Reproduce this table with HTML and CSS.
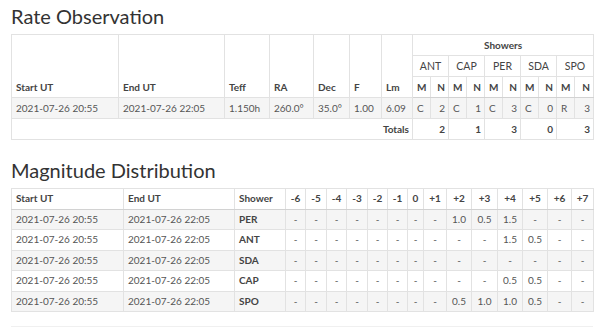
FILE: index.html
```html
<!DOCTYPE html>
<html>
<head>
<meta charset="utf-8">
<link rel="stylesheet" href="styles.css">
</head>
<body>
<div class="page">
  <h3 class="title first">Rate Observation</h3>
  <table class="tbl rate">
    <colgroup>
      <col class="w107"><col class="w106"><col class="w45"><col class="w44"><col class="w36"><col class="w32"><col class="w31">
      <col class="w18"><col class="w18"><col class="w18"><col class="w18"><col class="w18"><col class="w18"><col class="w18"><col class="w18"><col class="w18"><col class="w17">
    </colgroup>
    <thead>
      <tr>
        <th rowspan="3" class="bottom">Start UT</th>
        <th rowspan="3" class="bottom">End UT</th>
        <th rowspan="3" class="bottom">Teff</th>
        <th rowspan="3" class="bottom">RA</th>
        <th rowspan="3" class="bottom">Dec</th>
        <th rowspan="3" class="bottom">F</th>
        <th rowspan="3" class="bottom">Lm</th>
        <th colspan="10" class="center">Showers</th>
      </tr>
      <tr>
        <th colspan="2" class="center reg">ANT</th>
        <th colspan="2" class="center reg">CAP</th>
        <th colspan="2" class="center reg">PER</th>
        <th colspan="2" class="center reg">SDA</th>
        <th colspan="2" class="center reg">SPO</th>
      </tr>
      <tr class="last">
        <th class="m">M</th><th class="n">N</th>
        <th class="m">M</th><th class="n">N</th>
        <th class="m">M</th><th class="n">N</th>
        <th class="m">M</th><th class="n">N</th>
        <th class="m">M</th><th class="n">N</th>
      </tr>
    </thead>
    <tbody>
      <tr class="stripe">
        <td>2021-07-26 20:55</td>
        <td>2021-07-26 22:05</td>
        <td>1.150h</td>
        <td>260.0°</td>
        <td>35.0°</td>
        <td>1.00</td>
        <td>6.09</td>
        <td class="m">C</td><td class="n">2</td>
        <td class="m">C</td><td class="n">1</td>
        <td class="m">C</td><td class="n">3</td>
        <td class="m">C</td><td class="n">0</td>
        <td class="m">R</td><td class="n">3</td>
      </tr>
      <tr>
        <th colspan="7" class="right">Totals</th>
        <th colspan="2" class="right">2</th>
        <th colspan="2" class="right">1</th>
        <th colspan="2" class="right">3</th>
        <th colspan="2" class="right">0</th>
        <th colspan="2" class="right">3</th>
      </tr>
    </tbody>
  </table>

  <h3 class="title second">Magnitude Distribution</h3>
  <table class="tbl mag">
    <colgroup>
      <col class="w112"><col class="w111"><col class="w51">
      <col class="w20"><col class="w21"><col class="w20"><col class="w21"><col class="w20"><col class="w20"><col class="w16">
      <col class="w23"><col class="w25"><col class="w26"><col class="w25"><col class="w25"><col class="w24"><col class="w22">
    </colgroup>
    <thead>
      <tr class="last">
        <th>Start UT</th><th>End UT</th><th>Shower</th>
        <th class="center">-6</th><th class="center">-5</th><th class="center">-4</th><th class="center">-3</th><th class="center">-2</th><th class="center">-1</th><th class="center">0</th>
        <th class="center">+1</th><th class="center">+2</th><th class="center">+3</th><th class="center">+4</th><th class="center">+5</th><th class="center">+6</th><th class="center">+7</th>
      </tr>
    </thead>
    <tbody>
      <tr class="stripe">
        <td>2021-07-26 20:55</td><td>2021-07-26 22:05</td><td class="b">PER</td>
        <td class="c">-</td><td class="c">-</td><td class="c">-</td><td class="c">-</td><td class="c">-</td><td class="c">-</td><td class="c">-</td>
        <td class="c">-</td><td class="c">1.0</td><td class="c">0.5</td><td class="c">1.5</td><td class="c">-</td><td class="c">-</td><td class="c">-</td>
      </tr>
      <tr>
        <td>2021-07-26 20:55</td><td>2021-07-26 22:05</td><td class="b">ANT</td>
        <td class="c">-</td><td class="c">-</td><td class="c">-</td><td class="c">-</td><td class="c">-</td><td class="c">-</td><td class="c">-</td>
        <td class="c">-</td><td class="c">-</td><td class="c">-</td><td class="c">1.5</td><td class="c">0.5</td><td class="c">-</td><td class="c">-</td>
      </tr>
      <tr class="stripe">
        <td>2021-07-26 20:55</td><td>2021-07-26 22:05</td><td class="b">SDA</td>
        <td class="c">-</td><td class="c">-</td><td class="c">-</td><td class="c">-</td><td class="c">-</td><td class="c">-</td><td class="c">-</td>
        <td class="c">-</td><td class="c">-</td><td class="c">-</td><td class="c">-</td><td class="c">-</td><td class="c">-</td><td class="c">-</td>
      </tr>
      <tr>
        <td>2021-07-26 20:55</td><td>2021-07-26 22:05</td><td class="b">CAP</td>
        <td class="c">-</td><td class="c">-</td><td class="c">-</td><td class="c">-</td><td class="c">-</td><td class="c">-</td><td class="c">-</td>
        <td class="c">-</td><td class="c">-</td><td class="c">-</td><td class="c">0.5</td><td class="c">0.5</td><td class="c">-</td><td class="c">-</td>
      </tr>
      <tr class="stripe">
        <td>2021-07-26 20:55</td><td>2021-07-26 22:05</td><td class="b">SPO</td>
        <td class="c">-</td><td class="c">-</td><td class="c">-</td><td class="c">-</td><td class="c">-</td><td class="c">-</td><td class="c">-</td>
        <td class="c">-</td><td class="c">0.5</td><td class="c">1.0</td><td class="c">1.0</td><td class="c">0.5</td><td class="c">-</td><td class="c">-</td>
      </tr>
    </tbody>
  </table>
  <div class="next-panel"></div>
</div>
</body>
</html>
```

FILE: styles.css
```css
html, body {
  margin: 0;
  padding: 0;
  background: #fff;
}
body {
  font-family: Lato, "Open Sans", sans-serif;
  color: #555;
}
.page {
  padding: 0 7px 0 11px;
}
.title {
  font-family: Lato, sans-serif;
  font-weight: 400;
  font-size: 20px;
  line-height: 23px;
  color: #333;
  margin: 0;
}
.title.first {
  margin-top: 5px;
  margin-bottom: 6px;
}
.title.second {
  margin-top: 19px;
  margin-bottom: 6px;
}
.tbl {
  width: 582px;
  table-layout: fixed;
  border-collapse: collapse;
  font-size: 10px;
  line-height: 14px;
}
.tbl.mag {
  line-height: 13.5px;
}
.tbl th, .tbl td {
  border: 1px solid #e2e2e2;
  padding: 3px 4px;
  text-align: left;
  vertical-align: middle;
  white-space: nowrap;
  overflow: hidden;
}
.tbl th {
  font-weight: 700;
  color: #444;
}
.tbl tr.last th {
  border-bottom-color: #d2d2d2;
}
.tbl .bottom {
  vertical-align: bottom;
}
.tbl .center, .tbl .c {
  text-align: center;
}
.tbl .right {
  text-align: right;
}
.tbl th.reg {
  font-weight: 400;
  color: #444;
  font-size: 10.5px;
}
.tbl .m {
  text-align: left;
  padding-left: 4px;
  padding-right: 0;
}
.tbl .n {
  text-align: right;
  padding-left: 0;
  padding-right: 3px;
}
.tbl td.b {
  font-weight: 700;
  color: #444;
}
.tbl tr.stripe td {
  background: #f5f5f5;
}
.rate .right {
  padding-right: 3px;
}
.w107 { width: 107px; }
.w106 { width: 106px; }
.w45 { width: 45px; }
.w44 { width: 44px; }
.w36 { width: 36px; }
.w32 { width: 32px; }
.w31 { width: 31px; }
.w18 { width: 18px; }
.w17 { width: 19px; }
.w112 { width: 112px; }
.w111 { width: 111px; }
.w51 { width: 51px; }
.w20 { width: 20px; }
.w21 { width: 21px; }
.w16 { width: 16px; }
.w23 { width: 23px; }
.w25 { width: 25px; }
.w26 { width: 26px; }
.w24 { width: 24px; }
.w22 { width: 22px; }
.next-panel {
  margin-top: 14px;
  border-top: 1px solid #f0f0f0;
  width: 582px;
  height: 10px;
}
```
